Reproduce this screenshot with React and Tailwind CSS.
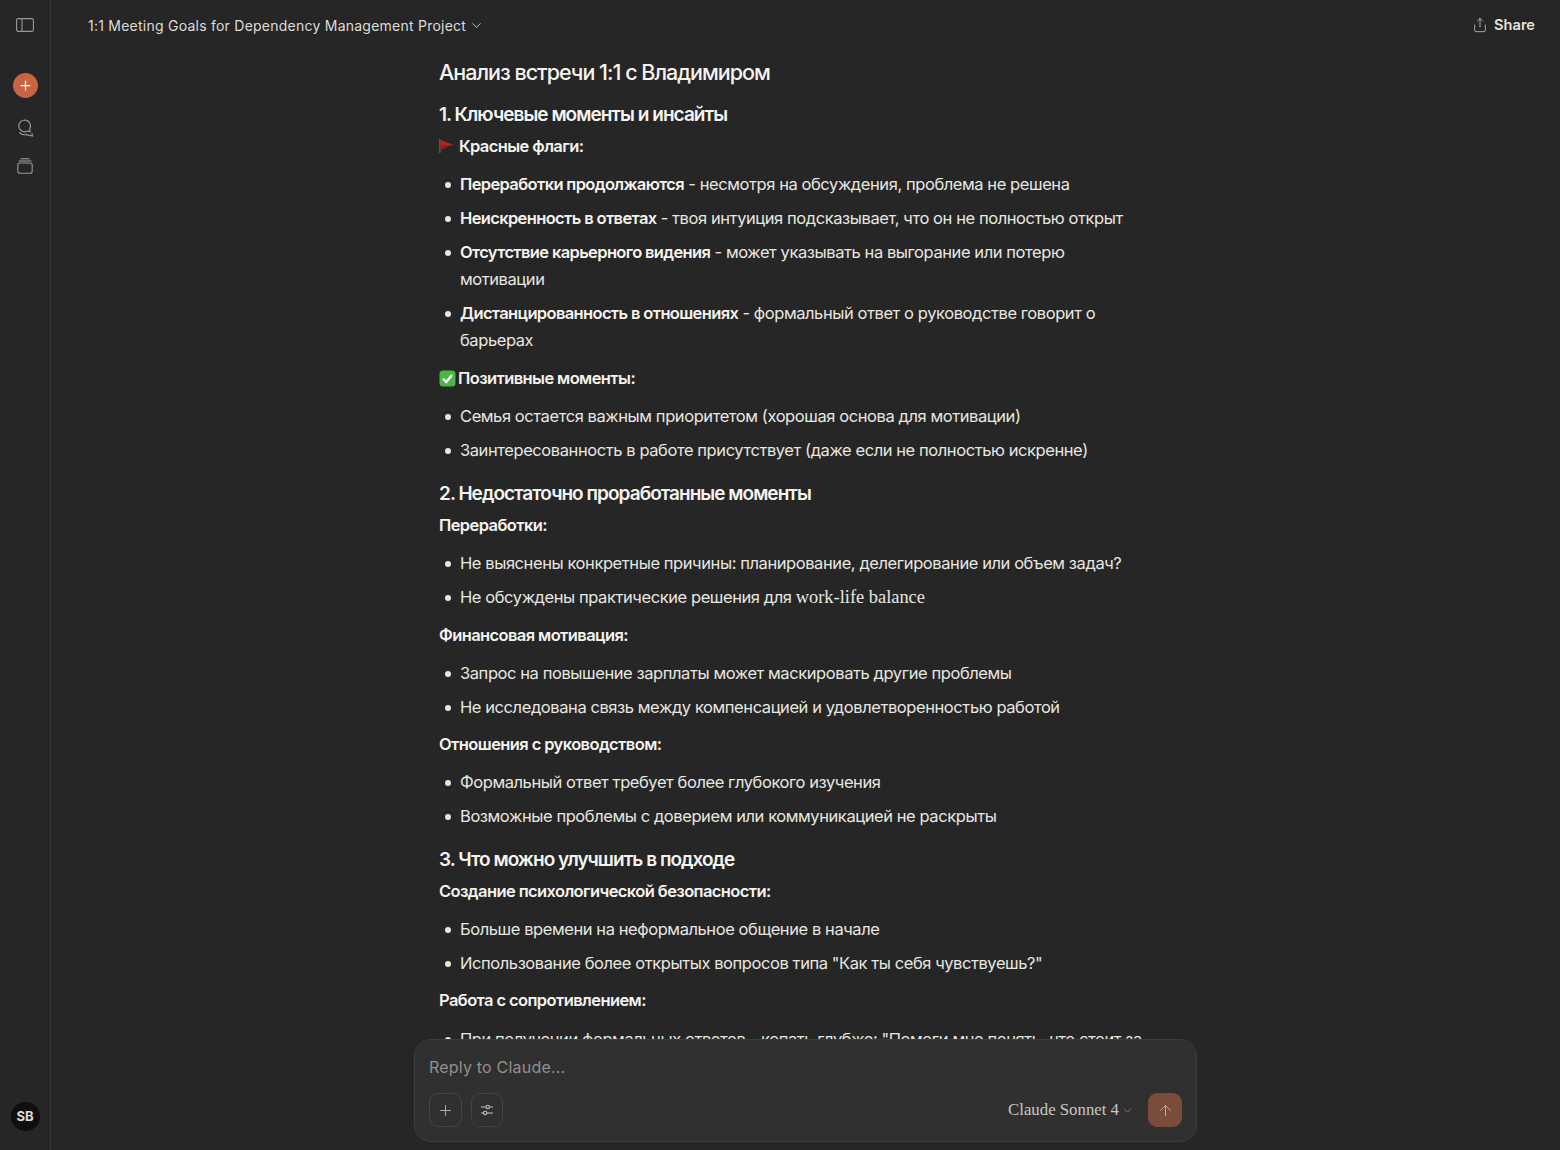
import { ChevronDown, Plus, ArrowUp, Share } from 'lucide-react';

const sans = "font-['Inter','Liberation_Sans',sans-serif]";

function Item({ bold, children }) {
  return (
    <li className="relative pl-[21px] mb-[6.4px] text-[16.5px] leading-[27.4px] tracking-[-0.42px] text-[#e8e6e0]">
      <span className="absolute left-[6px] top-[11px] w-[6px] h-[6px] rounded-full bg-[#ece9e2]" />
      {bold && <strong className="font-semibold text-[#f5f3ee] tracking-[-0.64px]">{bold}</strong>}
      {children}
    </li>
  );
}

function Sub({ className = '', children }) {
  return (
    <p className={`text-[16.5px] leading-[27.4px] font-semibold tracking-[-0.6px] text-[#f5f3ee] ${className}`}>{children}</p>
  );
}

function Heading({ className = '', children }) {
  return (
    <h2 className={`text-[19px] leading-[28px] font-semibold tracking-[-0.96px] text-[#f5f3ee] ${className}`}>{children}</h2>
  );
}

function Flag() {
  return (
    <svg width="16" height="16" viewBox="0 0 16 16" className="inline-block mr-[4px] align-[-2px]">
      <rect x="0.4" y="1" width="1" height="14" fill="#77706a" />
      <path d="M1.4 2 L15 7 L9 8.2 L1.4 12 Z" fill="#b3261e" />
      <path d="M1.4 7.5 L15 7 L9 8.2 L1.4 12 Z" fill="#8f1d18" />
    </svg>
  );
}

function Check() {
  return (
    <svg width="17" height="17" viewBox="0 0 17 17" className="inline-block mr-[2px] align-[-3px]">
      <rect x="0.5" y="0.5" width="16" height="16" rx="3.5" fill="#4cb543" />
      <path d="M4 8.8 L7.2 12 L13 5" fill="none" stroke="#fff" strokeWidth="2.2" />
    </svg>
  );
}

function Sidebar() {
  return (
    <aside className="w-[51px] shrink-0 h-full border-r border-[#383838] flex flex-col items-center pt-[18px] pb-[19px]">
      <svg width="18" height="14" viewBox="0 0 18 14" fill="none" stroke="#9b9a95" strokeWidth="1.1">
        <rect x="0.6" y="0.6" width="16.8" height="12.8" rx="1.6" />
        <path d="M6 0.6 V13.4" />
      </svg>
      <div className="mt-[41px] w-[25px] h-[25px] rounded-full bg-[#c96442] flex items-center justify-center">
        <Plus size={15} color="#fff" strokeWidth={2} />
      </div>
      <svg className="mt-[21px]" width="18" height="18" viewBox="0 0 18 18" fill="none" stroke="#9b9a95" strokeWidth="1.1">
        <path d="M8.6 1 A5.9 5.9 0 0 1 13.6 10 L14.2 12.8 L11.6 12 A5.9 5.9 0 1 1 8.6 1 Z" />
        <path d="M3.4 13 C4.2 14.8 7 16 10 15.6 L16.6 17 L15.8 14.2" />
      </svg>
      <svg className="mt-[21px]" width="16" height="16" viewBox="0 0 16 16" fill="none" stroke="#9b9a95" strokeWidth="1.1">
        <path d="M3.4 0.8 H12.6" />
        <path d="M1.6 3 H14.4" />
        <rect x="0.8" y="5" width="14.4" height="10.2" rx="2" />
      </svg>
      <div className="mt-auto w-[29px] h-[29px] rounded-full bg-[#0f0f0f] flex items-center justify-center text-[13px] font-bold text-[#dedcd6]">SB</div>
    </aside>
  );
}

function Composer() {
  return (
    <div className="absolute left-[363px] top-[1039px] w-[783px] h-[103px] rounded-[17px] bg-[#303030] border border-[#3c3c3c] px-[14px] pt-[17px]">
      <div className="text-[16px] leading-[20px] tracking-[0.2px] text-[#92918c]">Reply to Claude...</div>
      <div className="mt-[16px] flex items-center">
        <div className="w-[33px] h-[34px] rounded-[9px] border border-[#444] flex items-center justify-center">
          <Plus size={17} color="#b8b6b0" strokeWidth={1.3} />
        </div>
        <div className="ml-[9px] w-[32px] h-[34px] rounded-[9px] border border-[#444] flex items-center justify-center">
          <svg width="14" height="14" viewBox="0 0 14 14" fill="none" stroke="#c4c2bc" strokeWidth="1.1">
            <path d="M1 4 H6 M9.5 4 H13 M1 10 H3.5 M7 10 H13" />
            <circle cx="7.8" cy="4" r="1.7" />
            <circle cx="5.2" cy="10" r="1.7" />
          </svg>
        </div>
        <div className="ml-auto flex items-center font-['Liberation_Serif',serif] text-[16.8px] text-[#c9c7c1]">
          Claude Sonnet 4
          <ChevronDown size={13} color="#a09e98" strokeWidth={1.2} className="ml-[2px]" />
        </div>
        <div className="ml-[14px] w-[34px] h-[34px] rounded-[9px] bg-[#7b4c39] flex items-center justify-center">
          <ArrowUp size={17} color="#c9b3a8" strokeWidth={1.3} />
        </div>
      </div>
    </div>
  );
}

export default function App() {
  return (
    <div className={`w-full h-[1150px] flex overflow-hidden bg-[#262626] ${sans}`}>
      <Sidebar />
      <main className="relative flex-1 h-full overflow-hidden">
        <header className="h-[51px] flex items-center pl-[37px] pr-[25px]">
          <span className="text-[14px] tracking-[0.24px] text-[#dedcd6]">1:1 Meeting Goals for Dependency Management Project</span>
          <ChevronDown size={15} color="#c9c7c1" strokeWidth={1.5} className="ml-[3px]" />
          <div className="ml-auto flex items-center gap-[6px] text-[14.6px] font-semibold text-[#e4e2dc]">
            <Share size={16} color="#bdbbb5" strokeWidth={1.3} />
            Share
          </div>
        </header>
        <article className="w-[712px] ml-[388px] pt-[6px]">
          <h1 className="text-[21.5px] leading-[30px] font-medium tracking-[-1px] text-[#f5f3ee]">Анализ встречи 1:1 с Владимиром</h1>
          <Heading className="mt-[14px]">1. Ключевые моменты и инсайты</Heading>
          <Sub className="mt-[4px]"><Flag />Красные флаги:</Sub>
          <ul className="mt-[10.8px]">
            <Item bold="Переработки продолжаются"> - несмотря на обсуждения, проблема не решена</Item>
            <Item bold="Неискренность в ответах"> - твоя интуиция подсказывает, что он не полностью открыт</Item>
            <Item bold="Отсутствие карьерного видения"> - может указывать на выгорание или потерю мотивации</Item>
            <Item bold="Дистанцированность в отношениях"> - формальный ответ о руководстве говорит о барьерах</Item>
          </ul>
          <Sub className="mt-[10px]"><Check />Позитивные моменты:</Sub>
          <ul className="mt-[10.8px]">
            <Item>Семья остается важным приоритетом (хорошая основа для мотивации)</Item>
            <Item>Заинтересованность в работе присутствует (даже если не полностью искренне)</Item>
          </ul>
          <Heading className="mt-[16px]">2. Недостаточно проработанные моменты</Heading>
          <Sub className="mt-[4px]">Переработки:</Sub>
          <ul className="mt-[10.8px]">
            <Item>Не выяснены конкретные причины: планирование, делегирование или объем задач?</Item>
            <Item>Не обсуждены практические решения для <span className="font-['Liberation_Serif',serif] text-[18.4px] tracking-normal">work-life balance</span></Item>
          </ul>
          <Sub className="mt-[10.4px]">Финансовая мотивация:</Sub>
          <ul className="mt-[10.4px]">
            <Item>Запрос на повышение зарплаты может маскировать другие проблемы</Item>
            <Item>Не исследована связь между компенсацией и удовлетворенностью работой</Item>
          </ul>
          <Sub className="mt-[10px]">Отношения с руководством:</Sub>
          <ul className="mt-[10.4px]">
            <Item>Формальный ответ требует более глубокого изучения</Item>
            <Item>Возможные проблемы с доверием или коммуникацией не раскрыты</Item>
          </ul>
          <Heading className="mt-[16px]">3. Что можно улучшить в подходе</Heading>
          <Sub className="mt-[4px]">Создание психологической безопасности:</Sub>
          <ul className="mt-[10.8px]">
            <Item>Больше времени на неформальное общение в начале</Item>
            <Item>Использование более открытых вопросов типа "Как ты себя чувствуешь?"</Item>
          </ul>
          <Sub className="mt-[10px]">Работа с сопротивлением:</Sub>
          <ul className="mt-[11px]">
            <Item>При получении формальных ответов - копать глубже: "Помоги мне понять, что стоит за этим"</Item>
          </ul>
        </article>
        <Composer />
      </main>
    </div>
  );
}
